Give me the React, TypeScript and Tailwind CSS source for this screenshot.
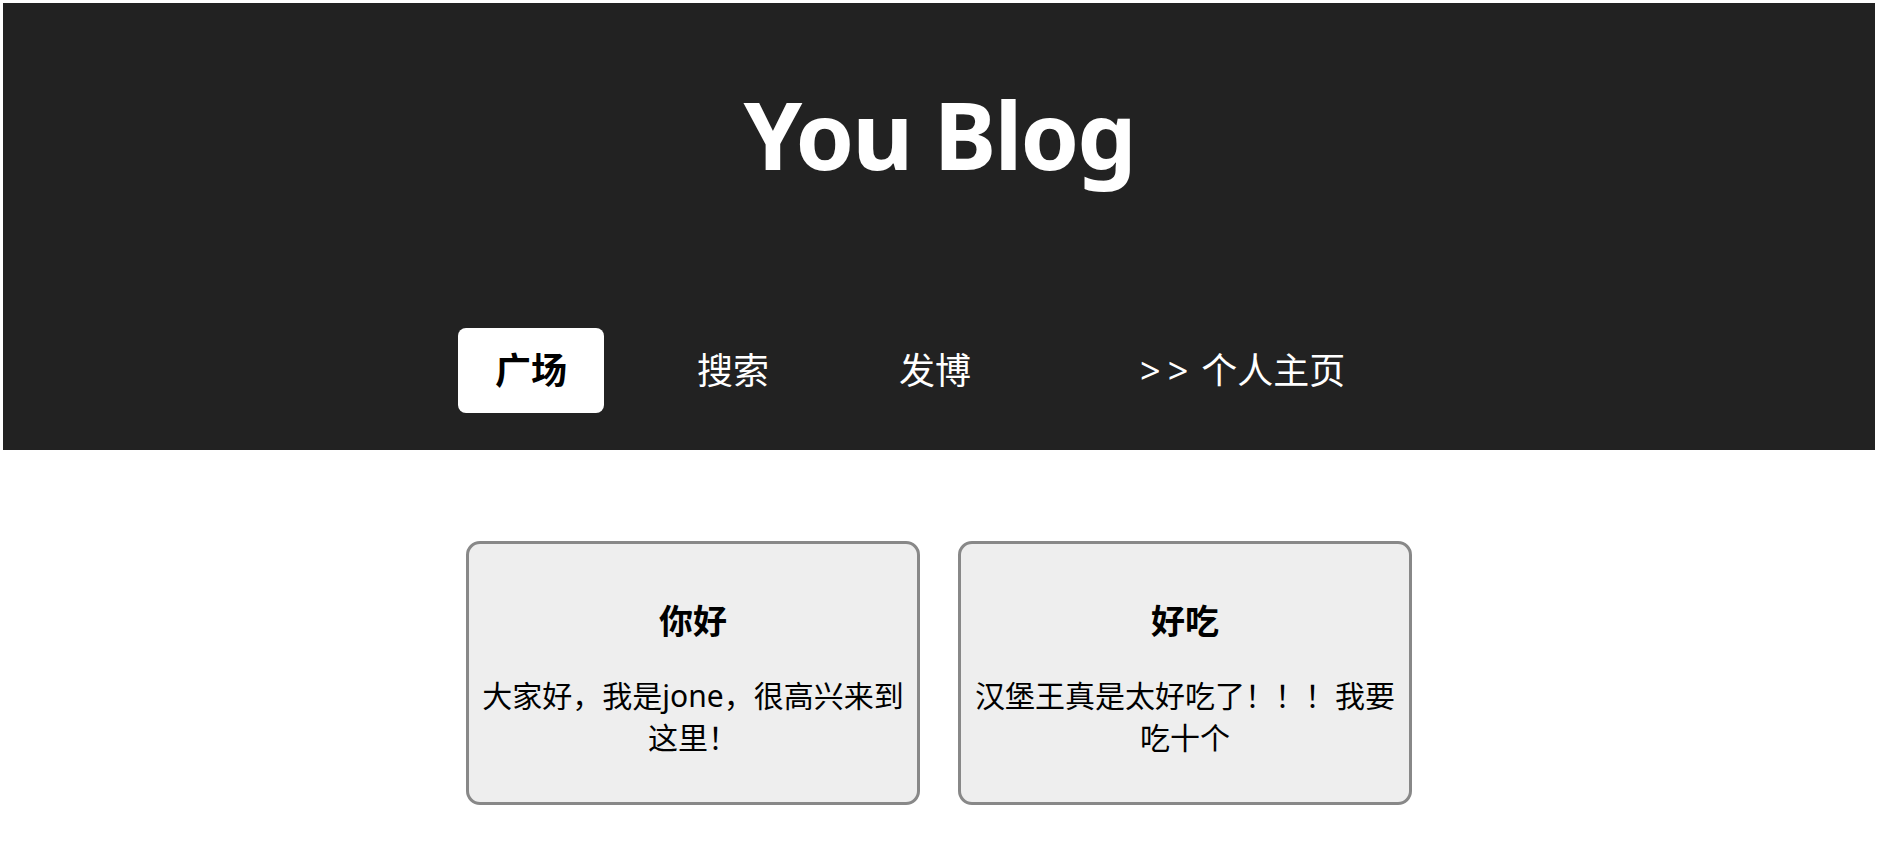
import React from "react";

const posts = [
  { title: "你好", body: "大家好，我是jone，很高兴来到这里！" },
  { title: "好吃", body: "汉堡王真是太好吃了！！！我要吃十个" },
];

export default function App() {
  return (
    <div
      className="min-h-screen bg-white p-[3px]"
      style={{ fontFamily: '"Noto Sans", "Noto Sans CJK SC", sans-serif' }}
    >
      <header className="bg-[#222222] pt-[84px] pb-[37px]">
        <h1 className="text-center text-[94px] leading-[94px] font-bold tracking-[-2px] text-white">
          You Blog
        </h1>
        <nav className="mt-[147px] flex items-center gap-[56px] pl-[455px] text-[36px] text-white">
          <a className="flex h-[85px] items-center rounded-lg bg-white px-[37px] font-bold text-black">
            广场
          </a>
          <a className="flex h-[85px] items-center px-[37px]">搜索</a>
          <a className="flex h-[85px] items-center px-[37px]">发博</a>
          <a className="ml-[39px] flex h-[85px] items-center px-[37px]">
            <span className="tracking-[7px]">&gt;&gt;</span>
            <span className="ml-[6px]">个人主页</span>
          </a>
        </nav>
      </header>

      <main className="mt-[91px] flex justify-center gap-[38px]">
        {posts.map((p) => (
          <div
            key={p.title}
            className="w-[454px] rounded-[14px] border-[3px] border-[#888888] bg-[#eeeeee] px-3 pt-[52px] pb-[43px] text-center text-black"
          >
            <h3 className="mb-[28px] text-[34px] leading-[51px] font-bold">
              {p.title}
            </h3>
            <p className="text-[30px] leading-[42px]">{p.body}</p>
          </div>
        ))}
      </main>
    </div>
  );
}
